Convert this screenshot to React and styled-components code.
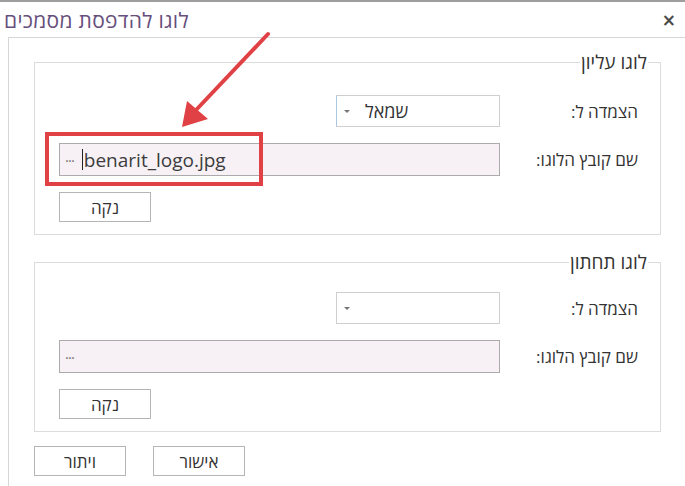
import styled, { createGlobalStyle } from 'styled-components';

const Global = createGlobalStyle`
  html, body { margin: 0; padding: 0; background: #fff; }
  body { font-family: "Open Sans", "Liberation Sans", "DejaVu Sans", sans-serif; }
`;

const Window = styled.div`
  position: relative;
  width: 685px;
  height: 486px;
  box-sizing: border-box;
  border-top: 2px solid #9e9e9e;
  background: #fff;
  overflow: hidden;
`;

const TitleBar = styled.div`
  height: 35px;
  display: flex;
  align-items: center;
  justify-content: space-between;
  padding: 1px 9px 0 4px;
  box-sizing: border-box;
`;

const Title = styled.div`
  direction: rtl;
  font-size: 21px;
  letter-spacing: 0.3px;
  color: #674f7d;
`;

const Close = styled.div`
  font-size: 17px;
  font-weight: bold;
  color: #4a4a4a;
  font-family: "DejaVu Sans", sans-serif;
`;

const Body = styled.div`
  direction: rtl;
  margin-left: 8px;
  height: 100%;
  border-top: 1px solid #d6d6d6;
  border-left: 1px solid #d6d6d6;
  padding: 13px 24px 0 25px;
  box-sizing: border-box;
`;

const Group = styled.fieldset`
  margin: 0 0 ${p => p.$gap}px 0;
  padding: 0;
  border: 1px solid #dcdcdc;
  min-width: 0;
`;

const Legend = styled.legend`
  margin-right: 12px;
  padding: 0 1px;
  font-size: 19px;
  line-height: 22px;
  color: #333;
`;

const Grid = styled.div`
  display: grid;
  grid-template-columns: 1fr 441px;
  row-gap: 16px;
  align-items: center;
  padding: ${p => p.$top}px 22px 12px 24px;
`;

const Label = styled.div`
  font-size: 17px;
  color: #333;
`;

const Select = styled.div`
  justify-self: start;
  width: 164px;
  height: 32px;
  box-sizing: border-box;
  border: 1px solid #cfcfcf;
  border-left-color: ${p => (p.$hover ? '#a8c8e4' : '#cfcfcf')};
  background: #fff;
  direction: ltr;
  display: flex;
  align-items: center;
  padding-left: 7px;
  gap: 15px;
  font-size: 18px;
  color: #333;
`;

const Caret = styled.span`
  width: 0;
  height: 0;
  border-left: 3px solid transparent;
  border-right: 3px solid transparent;
  border-top: 3px solid #777;
`;

const FileInput = styled.div`
  height: 33px;
  box-sizing: border-box;
  border: 1px solid #ababab;
  background: #f7f1f5;
  direction: ltr;
  display: flex;
  align-items: center;
  padding-left: 5px;
  font-size: 19px;
  color: #3c3c3c;
`;

const Dots = styled.span`
  font-size: 15px;
  color: #777;
  letter-spacing: -1px;
  margin-right: 8px;
`;

const Caret2 = styled.span`
  width: 1px;
  height: 21px;
  background: #222;
  margin-right: 1px;
`;

const Button = styled.button`
  width: 92px;
  height: 30px;
  box-sizing: border-box;
  border: 1px solid #b5b5b5;
  background: #fff;
  font-family: inherit;
  font-size: 17px;
  color: #333;
  padding: 0;
`;

const ClearButton = styled(Button)`
  grid-column: 2;
  justify-self: end;
`;

const Footer = styled.div`
  display: flex;
  justify-content: flex-start;
  flex-direction: row-reverse;
  gap: 27px;
  margin-top: 14px;
`;

const Overlay = styled.svg`
  position: absolute;
  left: 0;
  top: 0;
  pointer-events: none;
`;

const Highlight = styled.div`
  position: absolute;
  left: 45px;
  top: 130px;
  width: 218px;
  height: 54px;
  box-sizing: border-box;
  border: 4px solid #e04145;
`;

function LogoGroup({ legend, value, align, top, gap, hover }) {
  return (
    <Group $gap={gap}>
      <Legend>{legend}</Legend>
      <Grid $top={top}>
        <Label>הצמדה ל:</Label>
        <Select $hover={hover}>
          <Caret />
          {align}
        </Select>
        <Label>שם קובץ הלוגו:</Label>
        <FileInput>
          <Dots>···</Dots>
          {value && <Caret2 />}
          {value}
        </FileInput>
        <ClearButton>נקה</ClearButton>
      </Grid>
    </Group>
  );
}

export default function App() {
  return (
    <>
      <Global />
      <Window>
        <TitleBar>
          <Title>לוגו להדפסת מסמכים</Title>
          <Close>×</Close>
        </TitleBar>
        <Body>
          <LogoGroup legend="לוגו עליון" align="שמאל" value="benarit_logo.jpg" top={22} gap={16} hover />
          <LogoGroup legend="לוגו תחתון" align="" value="" top={19} gap={0} />
          <Footer>
            <Button>ויתור</Button>
            <Button>אישור</Button>
          </Footer>
        </Body>
        <Highlight />
        <Overlay width="685" height="486" viewBox="0 0 685 486">
          <line x1="268" y1="32" x2="197" y2="107" stroke="#e04145" strokeWidth="4" strokeLinecap="round" />
          <polygon points="182,125 187,99 208,117" fill="#e04145" />
        </Overlay>
      </Window>
    </>
  );
}
